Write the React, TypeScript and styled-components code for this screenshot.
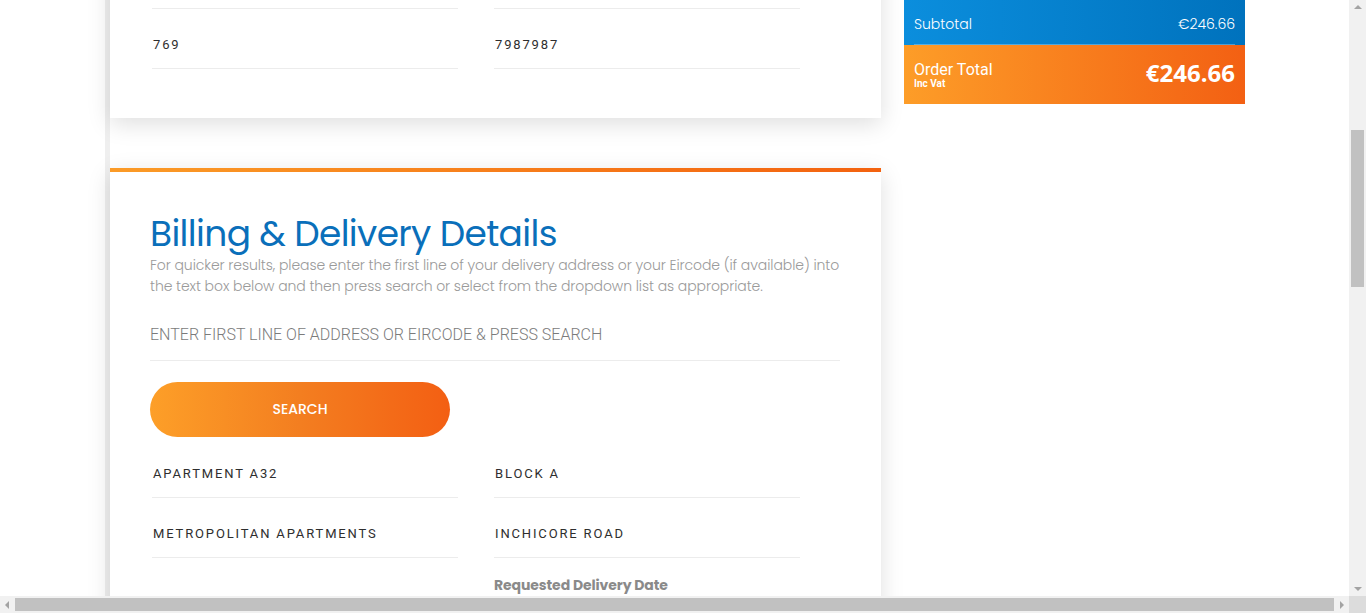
import React from "react";
import styled, { createGlobalStyle } from "styled-components";

const Global = createGlobalStyle`
  html, body { margin: 0; padding: 0; height: 100%; overflow: hidden; background: #fff; }
  #root { height: 100%; }
  * { box-sizing: border-box; }
`;

const Viewport = styled.div`
  display: grid;
  grid-template-columns: 1fr 17px;
  grid-template-rows: 1fr 17px;
  width: 1366px;
  height: 613px;
`;

const Scroller = styled.div`
  overflow: hidden;
  position: relative;
`;

const Page = styled.div`
  display: flex;
  align-items: flex-start;
  gap: 23px;
  padding-left: 105px;
`;

const LeftCol = styled.div`
  width: 776px;
  border-left: 5px solid #efefef;
  margin-top: -51px;
  display: flex;
  flex-direction: column;
  gap: 50px;
  padding-bottom: 100px;
`;

const Card = styled.section<{ $accent?: boolean }>`
  background: #fff;
  box-shadow: 0 6px 22px rgba(0, 0, 0, 0.13);
  border-top: ${(p) => (p.$accent ? "4px solid transparent" : "none")};
  border-image: ${(p) =>
    p.$accent ? "linear-gradient(90deg, #fb9b27, #f3620f) 1" : "none"};
  padding: ${(p) => (p.$accent ? "41px 40px 40px 40px" : "0 40px 49px 40px")};
`;

const FieldGrid = styled.div`
  display: grid;
  grid-template-columns: 306px 306px;
  column-gap: 36px;
  padding-left: 2px;
`;

const Field = styled.div`
  height: 60px;
  padding-top: 27px;
  padding-left: 1px;
  border-bottom: 1px solid #ececec;
  font-family: Roboto, "Liberation Sans", sans-serif;
  font-weight: 400;
  font-size: 13px;
  line-height: 18px;
  letter-spacing: 1.85px;
  color: #2e2e2e;
`;

const Title = styled.h2`
  margin: 0;
  font-family: "Poppins", "Open Sans", sans-serif;
  font-weight: 400;
  font-size: 36px;
  line-height: 42px;
  color: #0a6fba;
  letter-spacing: -0.65px;
`;

const Intro = styled.p`
  margin: 0;
  font-family: "Poppins", "Open Sans", sans-serif;
  font-weight: 300;
  font-size: 14px;
  line-height: 21px;
  color: #9a9a9a;
  max-width: 692px;
  letter-spacing: -0.08px;
`;

const SearchInput = styled.input`
  display: block;
  width: 690px;
  margin-top: 11px;
  height: 53px;
  border: none;
  border-bottom: 1px solid #ececec;
  padding: 0;
  outline: none;
  font-family: Roboto, "Liberation Sans", sans-serif;
  font-weight: 300;
  font-size: 16px;
  color: #555;
  &::placeholder { color: #7b7b7b; }
`;

const SearchButton = styled.button`
  display: block;
  margin-top: 21px;
  width: 300px;
  height: 55px;
  border: none;
  border-radius: 28px;
  background: linear-gradient(90deg, #fd9f28 0%, #f37e20 50%, #f35f13 100%);
  color: #fff;
  font-family: "Poppins", "Open Sans", sans-serif;
  font-weight: 500;
  font-size: 14px;
  cursor: pointer;
`;

const AddressGrid = styled(FieldGrid)`
  margin-top: 1px;
`;

const DateLabel = styled.div`
  grid-column: 2;
  padding-top: 17px;
  font-family: "Poppins", "Open Sans", sans-serif;
  font-weight: 700;
  font-size: 14px;
  color: #8a8a8a;
  letter-spacing: -0.1px;
`;

const Summary = styled.aside`
  width: 341px;
  display: flex;
  flex-direction: column;
`;

const SubtotalBar = styled.div`
  height: 45px;
  padding: 0 10px;
  background: linear-gradient(90deg, #0b8edd, #0072bd);
`;

const SubtotalInner = styled.div`
  height: 100%;
  display: flex;
  align-items: center;
  justify-content: space-between;
  padding-top: 4px;
  border-bottom: 1px solid rgba(255, 255, 255, 0.3);
  font-family: "Poppins", "Open Sans", sans-serif;
  font-weight: 300;
  font-size: 14px;
  color: #fff;
`;

const TotalBar = styled.div`
  height: 59px;
  padding: 0 10px;
  display: flex;
  align-items: center;
  justify-content: space-between;
  background: linear-gradient(90deg, #fd9d28, #f36013);
  color: #fff;
`;

const TotalLabel = styled.div`
  display: flex;
  flex-direction: column;
  font-family: Roboto, "Liberation Sans", sans-serif;
  font-size: 16px;
  line-height: 17px;
  margin-top: 2px;
  small {
    font-size: 10px;
    font-weight: 700;
    line-height: 12px;
  }
`;

const TotalAmount = styled.div`
  font-family: "Open Sans", sans-serif;
  font-weight: 700;
  font-size: 24px;
  margin-top: -5px;
`;

const VTrack = styled.div`
  background: #f1f1f1;
  display: flex;
  flex-direction: column;
  align-items: center;
  justify-content: space-between;
  padding: 5px 0;
  position: relative;
`;

const VThumb = styled.div`
  position: absolute;
  left: 2px;
  right: 2px;
  top: 130px;
  height: 157px;
  background: #c1c1c1;
`;

const HTrack = styled.div`
  background: #f1f1f1;
  display: flex;
  align-items: center;
  gap: 6px;
  padding: 0 5px;
`;

const HThumb = styled.div`
  flex: 1;
  height: 13px;
  background: #c1c1c1;
`;

const Corner = styled.div`
  background: #dcdcdc;
`;

const Arrow = ({ dir }: { dir: "up" | "down" | "left" | "right" }) => {
  const pts: Record<string, string> = {
    up: "0,4 4,0 8,4",
    down: "0,0 8,0 4,4",
    left: "4,0 4,8 0,4",
    right: "0,0 0,8 4,4",
  };
  const vertical = dir === "up" || dir === "down";
  return (
    <svg width={vertical ? 8 : 4} height={vertical ? 4 : 8} viewBox={vertical ? "0 0 8 4" : "0 0 4 8"}>
      <polygon points={pts[dir]} fill="#a3a3a3" />
    </svg>
  );
};

export default function App() {
  return (
    <>
      <Global />
      <Viewport>
        <Scroller>
          <Page>
            <LeftCol>
              <Card>
                <FieldGrid>
                  <Field />
                  <Field />
                  <Field>769</Field>
                  <Field>7987987</Field>
                </FieldGrid>
              </Card>
              <Card $accent>
                <Title>Billing &amp; Delivery Details</Title>
                <Intro>
                  For quicker results, please enter the first line of your delivery address or your Eircode (if available) into the text box below and then press search or select from the dropdown list as appropriate.
                </Intro>
                <SearchInput placeholder="ENTER FIRST LINE OF ADDRESS OR EIRCODE & PRESS SEARCH" />
                <SearchButton>SEARCH</SearchButton>
                <AddressGrid>
                  <Field>APARTMENT A32</Field>
                  <Field>BLOCK A</Field>
                  <Field>METROPOLITAN APARTMENTS</Field>
                  <Field>INCHICORE ROAD</Field>
                  <DateLabel>Requested Delivery Date</DateLabel>
                </AddressGrid>
              </Card>
            </LeftCol>
            <Summary>
              <SubtotalBar>
                <SubtotalInner>
                  <span>Subtotal</span>
                  <span>€246.66</span>
                </SubtotalInner>
              </SubtotalBar>
              <TotalBar>
                <TotalLabel>
                  <span>Order Total</span>
                  <small>Inc Vat</small>
                </TotalLabel>
                <TotalAmount>€246.66</TotalAmount>
              </TotalBar>
            </Summary>
          </Page>
        </Scroller>
        <VTrack>
          <Arrow dir="up" />
          <VThumb />
          <Arrow dir="down" />
        </VTrack>
        <HTrack>
          <Arrow dir="left" />
          <HThumb />
          <Arrow dir="right" />
        </HTrack>
        <Corner />
      </Viewport>
    </>
  );
}
